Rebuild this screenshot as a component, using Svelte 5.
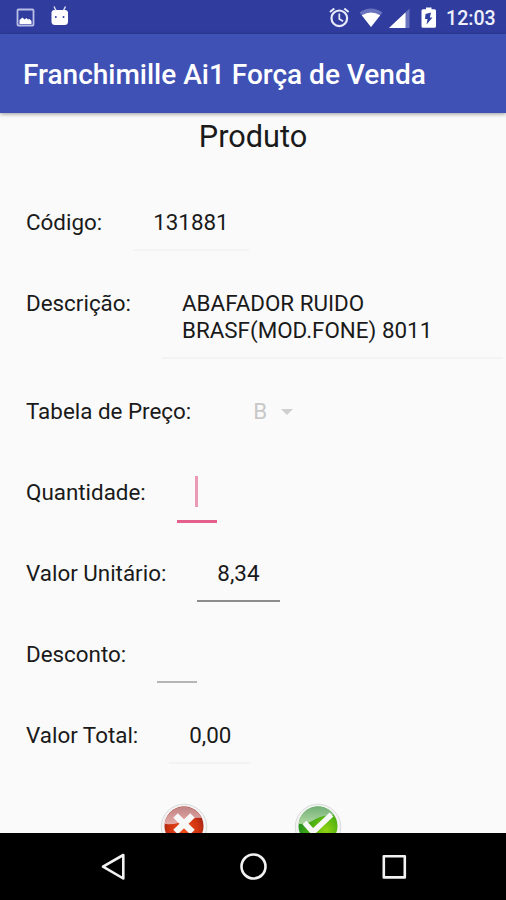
<script lang="ts">
    let code = '131881';
    let description = ['ABAFADOR RUIDO', 'BRASF(MOD.FONE) 8011'];
    let unitPrice = '8,34';
    let total = '0,00';
</script>

<div class="screen">
    <div class="status-bar">
        <svg class="notif" width="70" height="34" viewBox="0 0 70 34">
            <rect x="17.5" y="9.5" width="16" height="16" rx="1" fill="none" stroke="#b9bee6" stroke-width="1.8" />
            <path d="M19.500 24v-4l3-2.500 2 2 2-1.500 1.500 1.500 1.500-.500 2 2v3z" fill="#fff" />
            <path d="M51.500 13q0-3 3-3h10.500q3 0 3 3v8.500q0 3.500-3.500 3.500h-9.500q-3.500 0-3.500-3.500z" fill="#fff" />
            <path d="M54 6.500l2 4M65.500 6.500l-2 4" stroke="#dfe2f5" stroke-width="1.400" />
            <circle cx="55.800" cy="17" r="1" fill="#303f9f" />
            <circle cx="63.500" cy="17" r="1" fill="#303f9f" />
        </svg>
        <div class="status-right">
            <svg width="112" height="34" viewBox="326 0 112 34">
                <circle cx="339.300" cy="18.300" r="7.800" fill="none" stroke="#e8eafa" stroke-width="2.200" />
                <path d="M339.300 13.500v5.500l3.800 2.300" fill="none" stroke="#e8eafa" stroke-width="1.700" />
                <path d="M330 12l4.300-3.500M348.600 12l-4.300-3.500" stroke="#e8eafa" stroke-width="2" />
                <path d="M359.500 12.500q11.500-8 23 0l-11.500 14.500z" fill="#6a73bd" />
                <path d="M361.800 15.300q9.200-5.600 18.400 0l-9.200 11.700z" fill="#fff" />
                <path d="M409.500 8.500v19.500h-20.500z" fill="#6a73bd" />
                <path d="M405.500 12.500v15.500h-16.500z" fill="#fff" />
                <path d="M426 7.500h5.500v1.800h3q1.500 0 1.500 1.500v15.500q0 1.500-1.500 1.500h-11.500q-1.500 0-1.500-1.500v-15.500q0-1.500 1.500-1.500h3z" fill="#fff" />
                <path d="M431 12.500l-5.500 1.500-.500 5h2.500l-1 5.500 6-7h-2.700z" fill="#303f9f" />
            </svg>
            <span class="clock">12:03</span>
        </div>
    </div>
    <header class="app-bar">
        <h1>Franchimille Ai1 Força de Venda</h1>
    </header>

    <main>
        <h2>Produto</h2>
        <div class="row">
            <span class="label">Código:</span>
            <span class="field disabled">{code}</span>
        </div>
        <div class="row tall">
            <span class="label">Descrição:</span>
            <span class="field disabled wide">
                {#each description as line}
                    <span class="line">{line}</span>
                {/each}
            </span>
        </div>
        <div class="row">
            <span class="label">Tabela de Preço:</span>
            <span class="spinner">B <i class="arrow"></i></span>
        </div>
        <div class="row">
            <span class="label">Quantidade:</span>
            <span class="field focused"><i class="caret"></i></span>
        </div>
        <div class="row">
            <span class="label">Valor Unitário:</span>
            <span class="field">{unitPrice}</span>
        </div>
        <div class="row">
            <span class="label">Desconto:</span>
            <span class="field empty"></span>
        </div>
        <div class="row">
            <span class="label">Valor Total:</span>
            <span class="field disabled">{total}</span>
        </div>

        <div class="actions">
            <button aria-label="Cancelar">
                <svg width="50" height="50" viewBox="0 0 50 50">
                    <defs>
                        <radialGradient id="red" cx=".5" cy=".6" r=".55">
                            <stop offset="0" stop-color="#f0501c" />
                            <stop offset=".7" stop-color="#cf3210" />
                            <stop offset="1" stop-color="#a02414" />
                        </radialGradient>
                        <linearGradient id="redShine" x1="0" y1="0" x2="0" y2="1">
                            <stop offset="0" stop-color="#bf8484" />
                            <stop offset="1" stop-color="#e6aca8" />
                        </linearGradient>
                    </defs>
                    <circle cx="25" cy="25" r="22.800" fill="#f2f3f2" stroke="#d9dcdb" stroke-width="1" />
                    <circle cx="25" cy="24" r="19.500" fill="url(#red)" />
                    <path d="M5.600 22a19.500 19.500 0 0 1 37-6q-8-1-15 2-9 5-22 4z" fill="url(#redShine)" />
                    <path d="M16.500 13.500l17 16.500M33.500 13.500l-17 16.500" stroke="#f8f8f8" stroke-width="6.500" />
                </svg>
            </button>
            <button aria-label="Confirmar">
                <svg width="50" height="50" viewBox="0 0 50 50">
                    <defs>
                        <radialGradient id="green" cx=".7" cy=".6" r=".65">
                            <stop offset="0" stop-color="#93d313" />
                            <stop offset=".5" stop-color="#55b510" />
                            <stop offset="1" stop-color="#2a961c" />
                        </radialGradient>
                        <linearGradient id="greenShine" x1="0" y1="0" x2="0" y2="1">
                            <stop offset="0" stop-color="#72b077" />
                            <stop offset="1" stop-color="#b0d8a2" />
                        </linearGradient>
                    </defs>
                    <circle cx="25" cy="25" r="22.800" fill="#f2f3f2" stroke="#d9dcdb" stroke-width="1" />
                    <circle cx="25" cy="24" r="19.500" fill="url(#green)" />
                    <path d="M5.600 22a19.500 19.500 0 0 1 35.500-9q-11 0-18.500 4-7 5-17 5z" fill="url(#greenShine)" />
                    <path d="M11.500 20.500l8.500 9.500 18.500-17.500" fill="none" stroke="#f8f8f8" stroke-width="5.500" />
                </svg>
            </button>
        </div>
    </main>

    <nav>
        <svg width="506" height="67" viewBox="0 0 506 67">
            <g fill="none" stroke="#f2f2f2" stroke-width="2.600" stroke-linejoin="round">
                <path d="M123.300 22v23.500l-20.300-11.800z" />
                <circle cx="253.500" cy="33.500" r="12" />
                <rect x="383.800" y="23.200" width="21" height="21.200" />
            </g>
        </svg>
    </nav>
</div>

<style>
    :global(body) {
        margin: 0;
        background: #fafafa;
    }

    .screen {
        width: 506px;
        height: 900px;
        display: flex;
        flex-direction: column;
        overflow: hidden;
        background: #fafafa;
        color: #1a1a1a;
        font-family: Roboto, "Noto Sans", sans-serif;
        font-size: 22.4px;
    }

    .status-bar {
        height: 34px;
        flex: none;
        display: flex;
        justify-content: space-between;
        background: #303d9e;
    }

    .status-right {
        display: flex;
        padding-right: 10px;
    }

    .clock {
        width: 50px;
        margin-left: 8px;
        color: #eef0fb;
        font-size: 19.6px;
        font-weight: 500;
        line-height: 37px;
        white-space: nowrap;
    }

    .app-bar {
        height: 79px;
        flex: none;
        box-sizing: border-box;
        padding-left: 23px;
        background: #3f51b5;
        box-shadow: 0 1px 4px rgba(0, 0, 0, 0.4);
        z-index: 1;
    }

    h1 {
        margin: 0;
        color: #fff;
        font-size: 28px;
        font-weight: 500;
        line-height: 82px;
        white-space: nowrap;
    }

    main {
        height: 720px;
        flex: none;
        overflow: hidden;
    }

    h2 {
        height: 69px;
        margin: 0;
        font-size: 30.7px;
        font-weight: 400;
        line-height: 47px;
        text-align: center;
    }

    .row {
        height: 81px;
        box-sizing: border-box;
        display: flex;
        align-items: flex-start;
        padding: 27px 0 0 26px;
        line-height: 27px;
        white-space: nowrap;
    }

    .row.tall {
        height: 108px;
    }

    .label {
        margin-right: 31px;
    }

    .field {
        min-width: 40px;
        min-height: 42px;
        box-sizing: border-box;
        padding: 0 20px 13px;
        border-bottom: 2px solid #8c8c8c;
    }

    .field.disabled {
        border-bottom-color: #f3f3f3;
    }

    .field.wide {
        width: 341px;
    }

    .field.empty {
        border-bottom-color: #b5b5b5;
    }

    .field.focused {
        width: 40px;
        min-height: 44px;
        padding: 0 0 0 18px;
        border-bottom: 3px solid #e4608c;
    }

    .line {
        display: block;
    }

    .caret {
        display: block;
        width: 3px;
        height: 31px;
        margin-top: -3px;
        background: #eb9ab5;
    }

    .spinner {
        display: flex;
        align-items: center;
        gap: 14px;
        margin-left: 31px;
        color: #c8c8c8;
    }

    .arrow {
        border: 6px solid transparent;
        border-top-color: #cfcfcf;
        border-bottom: 0;
    }

    .actions {
        display: flex;
        gap: 84px;
        padding: 26px 0 0 159px;
    }

    button {
        padding: 0;
        border: 0;
        background: none;
        line-height: 0;
    }

    nav {
        height: 67px;
        flex: none;
        background: #000;
    }

    nav svg {
        display: block;
    }
</style>
